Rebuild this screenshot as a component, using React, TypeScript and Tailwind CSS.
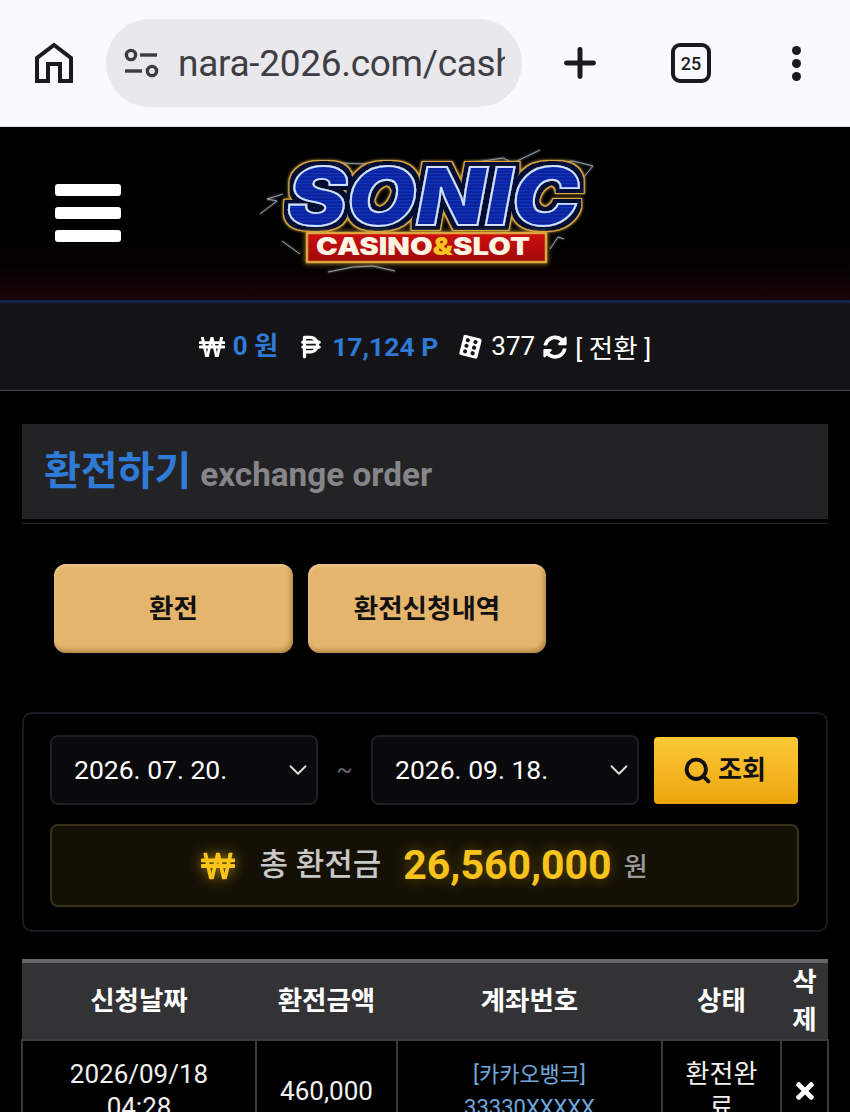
import { ChevronDown, Plus, Search } from "lucide-react"
import { FaTimes, FaSyncAlt, FaWonSign } from "react-icons/fa"
import { FaPesoSign } from "react-icons/fa6"

const font = { fontFamily: "Roboto, 'Noto Sans CJK KR', sans-serif" }

function HomeIcon() {
  return (
    <svg width="40" height="42" viewBox="0 0 40 42" fill="none" stroke="#1b1b1f" strokeWidth="4" strokeLinejoin="miter">
      <path d="M3 39V16L20 3l17 13v23H26V22H14v17H3Z" />
    </svg>
  )
}

function TuneIcon() {
  return (
    <svg width="36" height="30" viewBox="0 0 36 30" fill="none" stroke="#3b3b40" strokeWidth="3.4">
      <circle cx="7" cy="7" r="4.6" />
      <path d="M16 7h17" />
      <path d="M1 23h17" />
      <circle cx="28" cy="23" r="4.6" />
    </svg>
  )
}

function DiceIcon() {
  return (
    <svg width="27" height="27" viewBox="0 0 26 26">
      <g transform="rotate(14 13 13)">
        <path d="M6 3h15a2 2 0 0 1 2 2v16a2 2 0 0 1-2 2H7a2 2 0 0 1-2-2V4Z" fill="#fff" />
        <circle cx="10" cy="7.5" r="2" fill="#141416" />
        <circle cx="10" cy="13" r="2" fill="#141416" />
        <circle cx="10" cy="18.5" r="2" fill="#141416" />
        <circle cx="17.5" cy="7.5" r="2" fill="#141416" />
        <circle cx="17.5" cy="13" r="2" fill="#141416" />
        <circle cx="17.5" cy="18.5" r="2" fill="#141416" />
      </g>
    </svg>
  )
}

function SonicLogo() {
  return (
    <svg width="340" height="140" viewBox="0 0 340 140">
      <defs>
        <pattern id="scan" width="4" height="3.4" patternUnits="userSpaceOnUse">
          <rect width="4" height="3.4" fill="#09239a" />
          <rect width="4" height="1" fill="#1138c4" />
        </pattern>
        <linearGradient id="plate" x1="0" y1="0" x2="0" y2="1">
          <stop offset="0" stopColor="#cf1010" />
          <stop offset="1" stopColor="#a00808" />
        </linearGradient>
        <filter id="outline" x="-10%" y="-20%" width="120%" height="140%">
          <feMorphology in="SourceAlpha" operator="dilate" radius="5" result="outer" />
          <feFlood floodColor="#d9a63f" />
          <feComposite in2="outer" operator="in" result="gold" />
          <feMorphology in="SourceAlpha" operator="dilate" radius="3.5" result="inner" />
          <feFlood floodColor="#050a35" />
          <feComposite in2="inner" operator="in" result="navy" />
          <feGaussianBlur in="gold" stdDeviation="1.6" result="glow" />
          <feMerge>
            <feMergeNode in="glow" />
            <feMergeNode in="gold" />
            <feMergeNode in="navy" />
            <feMergeNode in="SourceGraphic" />
          </feMerge>
        </filter>
        <filter id="bolt" x="-20%" y="-40%" width="140%" height="180%">
          <feGaussianBlur stdDeviation="1.2" result="b" />
          <feMerge>
            <feMergeNode in="b" />
            <feMergeNode in="SourceGraphic" />
          </feMerge>
        </filter>
        <filter id="plateGlow" x="-10%" y="-30%" width="120%" height="160%">
          <feGaussianBlur stdDeviation="2.5" />
        </filter>
      </defs>
      <g fill="none" stroke="#cfe0ee" strokeWidth="1" filter="url(#bolt)" opacity="0.7">
        <path d="M215 24l33-5 10 5 27-13" />
        <path d="M298 24l20-2 20 5-10 12" />
        <path d="M5 75l17-13-10-2 16-5" />
        <path d="M27 102l18 13" />
        <path d="M73 133l25-5 20-1 22 5" />
        <path d="M85 24l27 1" />
        <path d="M295 110l8-12 6 2" />
      </g>
      <text x="178" y="86" textAnchor="middle" fontFamily="Inter, Roboto, sans-serif" fontWeight="900" fontStyle="italic" fontSize="80" textLength="292" lengthAdjust="spacingAndGlyphs" fill="url(#scan)" stroke="#cfe0ff" strokeWidth="1.8" filter="url(#outline)">SONIC</text>
      <rect x="50" y="92" width="243" height="33" fill="#e8b040" opacity="0.6" filter="url(#plateGlow)" />
      <rect x="52" y="94" width="239" height="29" fill="url(#plate)" stroke="#d9a63f" strokeWidth="2.5" />
      <text x="168" y="116" textAnchor="middle" fontFamily="Inter, Roboto, sans-serif" fontWeight="900" fontSize="24" textLength="214" lengthAdjust="spacingAndGlyphs" fill="#fff3e4">
        CASINO<tspan fill="#f8c51c">&amp;</tspan>SLOT
      </text>
    </svg>
  )
}

function BrowserBar() {
  return (
    <div className="h-[127px] bg-[#faf9fd] border-b border-[#dcdce0] flex items-center pl-[34px]">
      <HomeIcon />
      <div className="ml-[32px] w-[416px] h-[88px] shrink-0 rounded-[44px] bg-[#e9e8ec] flex items-center pl-[18px] mt-[-1px]">
        <TuneIcon />
        <span className="ml-[18px] w-[327px] mt-[3px] text-[37px] tracking-[-0.3px] text-[#3e3e44] overflow-hidden whitespace-nowrap">nara-2026.com/cash</span>
      </div>
      <Plus className="ml-[35px] shrink-0 text-[#1b1b1f]" size={46} strokeWidth={2.6} />
      <div className="ml-[68px] w-[40px] h-[40px] shrink-0 border-[4px] border-[#1b1b1f] rounded-[9px] flex items-center justify-center text-[18px] font-medium text-[#1b1b1f]">25</div>
      <div className="ml-[81px] shrink-0 flex flex-col gap-[4px]">
        <span className="w-[9px] h-[9px] rounded-full bg-[#1b1b1f]" />
        <span className="w-[9px] h-[9px] rounded-full bg-[#1b1b1f]" />
        <span className="w-[9px] h-[9px] rounded-full bg-[#1b1b1f]" />
      </div>
    </div>
  )
}

function SiteHeader() {
  return (
    <div className="h-[176px] border-b-[3px] border-[#16224f] bg-gradient-to-b from-black via-black to-[#170606] flex items-center">
      <div className="ml-[55px] mt-[-2px] w-[66px] flex flex-col gap-[11px]">
        <span className="h-[12px] rounded-[3px] bg-white" />
        <span className="h-[12px] rounded-[3px] bg-white" />
        <span className="h-[12px] rounded-[3px] bg-white" />
      </div>
      <div className="ml-[134px] mt-[-9px]">
        <SonicLogo />
      </div>
    </div>
  )
}

function StatusBar() {
  return (
    <div className="h-[88px] bg-[#141416] border-b border-[#4a4a4c] flex items-center justify-center text-[26px] text-white">
      <FaWonSign size={26} />
      <span className="ml-[8px] font-bold text-[#2f7ad6]">0 원</span>
      <FaPesoSign size={26} className="ml-[20px]" />
      <span className="ml-[8px] font-bold text-[#2f7ad6] text-[26.5px]">17,124 P</span>
      <span className="ml-[18px]"><DiceIcon /></span>
      <span className="ml-[8px]">377</span>
      <FaSyncAlt size={24} className="ml-[8px]" />
      <span className="ml-[8px] mt-[4px] text-[26.5px]">[ 전환 ]</span>
    </div>
  )
}

function Title() {
  return (
    <div className="mx-[22px] mt-[33px] border-b border-[#26262a] pb-[4px]">
      <div className="h-[95px] bg-[#232325] flex items-center pl-[22px] gap-[9px]">
        <span className="text-[40px] font-bold text-[#2f7ad6]">환전하기</span>
        <span className="text-[33.3px] font-bold text-[#85858a] mt-[7px]">exchange order</span>
      </div>
    </div>
  )
}

function TabButton({ label, width }: { label: string; width: string }) {
  return (
    <button className={`${width} h-[89px] rounded-[12px] bg-[#e5b56e] text-[26.5px] font-bold text-[#111] shadow-[inset_-2px_-3px_4px_rgba(120,80,30,0.45),inset_1px_2px_3px_rgba(255,240,200,0.35)]`}>
      {label}
    </button>
  )
}

function DateSelect({ value }: { value: string }) {
  return (
    <div className="w-[268px] h-[70px] rounded-[8px] border-[2px] border-[#1e1e24] bg-[#0a0a0d] flex items-center justify-between pl-[22px] pr-[3px] text-[26.5px] text-white">
      <span>{value}</span>
      <ChevronDown size={30} strokeWidth={1.5} className="text-[#dddddd]" />
    </div>
  )
}

function Filter() {
  return (
    <div className="mx-[22px] mt-[59px] h-[220px] rounded-[10px] border-[2px] border-[#1a1a20] px-[26px] pt-[21px]">
      <div className="flex items-center">
        <DateSelect value="2026. 07. 20." />
        <span className="w-[53px] text-center text-[24px] text-[#66666a]">~</span>
        <DateSelect value="2026. 09. 18." />
        <button className="ml-[15px] w-[144px] h-[67px] rounded-[4px] bg-gradient-to-b from-[#fdc935] to-[#eca509] flex items-center justify-center gap-[6px] pr-[3px] text-[26px] font-bold text-[#111]">
          <Search size={29} strokeWidth={3.2} />
          조회
        </button>
      </div>
      <div className="mt-[19px] w-[749px] h-[83px] rounded-[8px] border-[2px] border-[#3a3218] bg-[#141005] flex items-center justify-center">
        <FaWonSign size={34} className="text-[#fcc419] drop-shadow-[0_0_7px_rgba(252,196,25,0.6)]" />
        <span className="ml-[24px] text-[31px] font-medium text-[#c8c8c8]">총 환전금</span>
        <span className="ml-[22px] text-[41px] font-bold text-[#f8c41c] [text-shadow:0_0_14px_rgba(252,196,25,0.35)]">26,560,000</span>
        <span className="ml-[12px] text-[26px] font-medium text-[#9a9a9a] mt-[4px]">원</span>
      </div>
    </div>
  )
}

function HistoryTable() {
  const th = "font-bold text-[26.5px] text-white"
  const td = "border-2 border-[#3a3a3c] text-center align-middle text-[26px] leading-[33px] text-[#f0f0f0]"
  return (
    <div className="ml-[21px] mt-[27px]">
      <table className="w-[806px] table-fixed border-collapse">
        <colgroup>
          <col className="w-[234px]" />
          <col className="w-[141px]" />
          <col className="w-[265px]" />
          <col className="w-[119px]" />
          <col className="w-[47px]" />
        </colgroup>
        <thead>
          <tr className="h-[79px] bg-[#333235] border-t-[4px] border-[#66666a]">
            <th className={th}>신청날짜</th>
            <th className={th}>환전금액</th>
            <th className={th}>계좌번호</th>
            <th className={th}>상태</th>
            <th className={`${th} leading-[38px]`}>삭<br />제</th>
          </tr>
        </thead>
        <tbody>
          <tr className="h-[102px]">
            <td className={td}>2026/09/18<br />04:28</td>
            <td className={td}>460,000</td>
            <td className="border-2 border-[#3a3a3c] text-center align-middle text-[22px] leading-[33px] text-[#6fa8dc]">[카카오뱅크]<br />33330XXXXX</td>
            <td className={td}>환전완<br />료</td>
            <td className={td}><FaTimes size={26} className="mx-auto text-white" /></td>
          </tr>
        </tbody>
      </table>
    </div>
  )
}

export default function App() {
  return (
    <div className="w-[850px] h-[1112px] overflow-hidden bg-black" style={font}>
      <BrowserBar />
      <SiteHeader />
      <StatusBar />
      <Title />
      <div className="mt-[40px] ml-[54px] flex gap-[15px]">
        <TabButton label="환전" width="w-[239px]" />
        <TabButton label="환전신청내역" width="w-[238px]" />
      </div>
      <Filter />
      <HistoryTable />
    </div>
  )
}
